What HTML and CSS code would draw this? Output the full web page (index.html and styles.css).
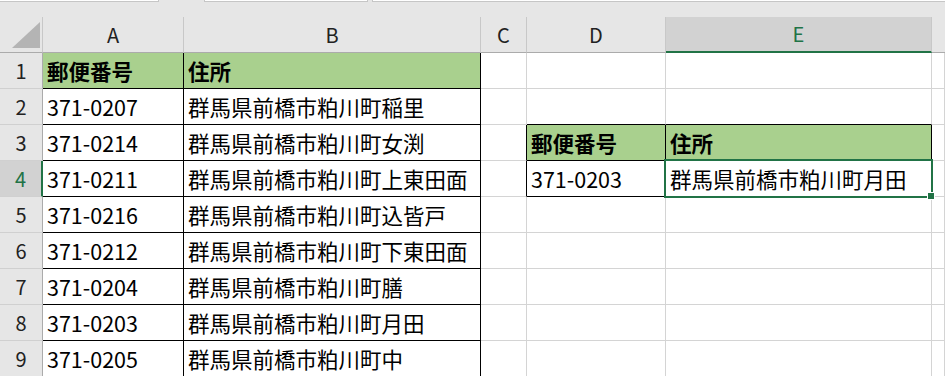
FILE: index.html
```html
<!DOCTYPE html>
<html lang="ja">
<head>
<meta charset="utf-8">
<link rel="stylesheet" href="styles.css">
</head>
<body>
<div class="topbar">
  <div class="tb tb1"></div>
  <div class="tb tb2"></div>
  <div class="tb tb3"></div>
</div>
<div class="sheet">
  <div class="grid">
    <div class="ch corner"><svg width="43" height="35" viewBox="0 0 43 35"><polygon points="12,31 40,31 40,5" fill="#b4b4b4"/></svg></div>
    <div class="ch">A</div>
    <div class="ch">B</div>
    <div class="ch">C</div>
    <div class="ch">D</div>
    <div class="ch ch-sel">E</div>
    <div class="ch ch-last"></div>

    <div class="rh">1</div>
    <div class="c hd bk">郵便番号</div>
    <div class="c hd bk">住所</div>
    <div class="c"></div>
    <div class="c"></div>
    <div class="c"></div>
    <div class="c"></div>

    <div class="rh">2</div>
    <div class="c bk">371-0207</div>
    <div class="c bk">群馬県前橋市粕川町稲里</div>
    <div class="c"></div>
    <div class="c bb"></div>
    <div class="c bb"></div>
    <div class="c"></div>

    <div class="rh">3</div>
    <div class="c bk">371-0214</div>
    <div class="c bk">群馬県前橋市粕川町女渕</div>
    <div class="c br"></div>
    <div class="c hd bk">郵便番号</div>
    <div class="c hd bk">住所</div>
    <div class="c"></div>

    <div class="rh rh-sel">4</div>
    <div class="c bk">371-0211</div>
    <div class="c bk">群馬県前橋市粕川町上東田面</div>
    <div class="c br"></div>
    <div class="c bk">371-0203</div>
    <div class="c bk">群馬県前橋市粕川町月田</div>
    <div class="c"></div>

    <div class="rh">5</div>
    <div class="c bk">371-0216</div>
    <div class="c bk">群馬県前橋市粕川町込皆戸</div>
    <div class="c"></div>
    <div class="c"></div>
    <div class="c"></div>
    <div class="c"></div>

    <div class="rh">6</div>
    <div class="c bk">371-0212</div>
    <div class="c bk">群馬県前橋市粕川町下東田面</div>
    <div class="c"></div>
    <div class="c"></div>
    <div class="c"></div>
    <div class="c"></div>

    <div class="rh">7</div>
    <div class="c bk">371-0204</div>
    <div class="c bk">群馬県前橋市粕川町膳</div>
    <div class="c"></div>
    <div class="c"></div>
    <div class="c"></div>
    <div class="c"></div>

    <div class="rh">8</div>
    <div class="c bk">371-0203</div>
    <div class="c bk">群馬県前橋市粕川町月田</div>
    <div class="c"></div>
    <div class="c"></div>
    <div class="c"></div>
    <div class="c"></div>

    <div class="rh">9</div>
    <div class="c bk">371-0205</div>
    <div class="c bk">群馬県前橋市粕川町中</div>
    <div class="c"></div>
    <div class="c"></div>
    <div class="c"></div>
    <div class="c"></div>
  </div>
  <div class="selection"><div class="handle"></div></div>
</div>
</body>
</html>
```
FILE: styles.css
```css
* { box-sizing: border-box; }
html, body {
  margin: 0;
  padding: 0;
  width: 945px;
  height: 376px;
  overflow: hidden;
  background: #e6e6e6;
  font-family: "Noto Sans CJK JP", sans-serif;
}
.topbar {
  display: flex;
  height: 17px;
  align-items: flex-start;
}
.tb {
  height: 2px;
  background: #ffffff;
  border: 1px solid #c6c6c6;
  border-top: none;
}
.tb1 { width: 159px; border-left: none; }
.tb2 { width: 164px; margin-left: 45px; }
.tb3 { flex: 1; margin-left: 4px; border-right: none; }

.sheet {
  position: relative;
}
.grid {
  display: grid;
  grid-template-columns: 43px 141px 297px 46px 139px 266px 1fr;
  grid-template-rows: repeat(10, 36px);
}
.ch {
  display: flex;
  align-items: center;
  justify-content: center;
  background: #e6e6e6;
  border-right: 1px solid #c8c8c8;
  border-bottom: 1px solid #ababab;
  font-size: 20px;
  line-height: 1;
  color: #222;
}
.corner {
  display: block;
  border-right: 1px solid #c8c8c8;
}
.corner svg { display: block; }
.ch-sel {
  background: #d2d2d2;
  color: #217346;
  border-bottom: 2px solid #217346;
  border-left: 0;
}
.ch-last { border-right: none; }

.rh {
  display: flex;
  align-items: center;
  justify-content: center;
  background: #e6e6e6;
  border-right: 1px solid #ababab;
  border-bottom: 1px solid #d0d0d0;
  font-size: 20px;
  line-height: 1;
  color: #222;
}
.rh-sel {
  background: #d2d2d2;
  color: #217346;
  border-right: 2px solid #217346;
}

.c {
  display: flex;
  align-items: center;
  padding-left: 4px;
  background: #ffffff;
  border-right: 1px solid #d4d4d4;
  border-bottom: 1px solid #d4d4d4;
  font-size: 21.5px;
  line-height: 1;
  color: #000;
  white-space: nowrap;
  overflow: hidden;
}
.bk {
  border-right-color: #000;
  border-bottom-color: #000;
}
.br { border-right-color: #000; }
.bb { border-bottom-color: #000; }
.hd {
  background: #a9d08e;
  font-weight: 700;
}

.selection {
  position: absolute;
  left: 664px;
  top: 142px;
  width: 269px;
  height: 39px;
  border: 2px solid #217346;
}
.handle {
  position: absolute;
  right: -4px;
  bottom: -4px;
  width: 8px;
  height: 8px;
  background: #217346;
  border: 1px solid #ffffff;
}
```
